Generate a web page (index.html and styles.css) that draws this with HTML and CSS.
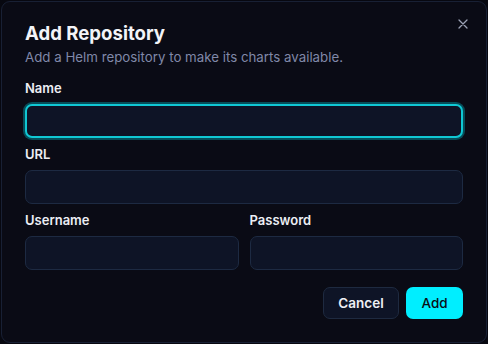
FILE: index.html
```html
<!DOCTYPE html>
<html lang="en">
<head>
<meta charset="utf-8">
<title>Add Repository</title>
<link rel="stylesheet" href="styles.css">
</head>
<body>
<div class="dialog">
  <button class="close" aria-label="Close">
    <svg width="10" height="10" viewBox="0 0 10 10"><path d="M1 1L9 9M9 1L1 9" stroke="currentColor" stroke-width="1.3" stroke-linecap="round"/></svg>
  </button>
  <div class="header">
    <h2 class="title">Add Repository</h2>
    <p class="subtitle">Add a Helm repository to make its charts available.</p>
  </div>
  <div class="form">
    <div class="field">
      <label class="label">Name</label>
      <div class="input focused"></div>
    </div>
    <div class="field">
      <label class="label">URL</label>
      <div class="input"></div>
    </div>
    <div class="row">
      <div class="field">
        <label class="label">Username</label>
        <div class="input"></div>
      </div>
      <div class="field">
        <label class="label">Password</label>
        <div class="input"></div>
      </div>
    </div>
  </div>
  <div class="actions">
    <button class="btn btn-secondary">Cancel</button>
    <button class="btn btn-primary">Add</button>
  </div>
</div>
</body>
</html>
```
FILE: styles.css
```css
* { box-sizing: border-box; }
html, body { margin: 0; padding: 0; }
body {
  width: 488px;
  height: 344px;
  background: #070810;
  font-family: Inter, "Noto Sans", sans-serif;
  overflow: hidden;
}
.dialog {
  position: relative;
  margin: 1px 0 0 1px;
  width: 486px;
  height: 342px;
  background: #0a0b15;
  border: 1px solid #182034;
  border-radius: 9px;
  padding: 17px 23px 0 23px;
}
.close {
  position: absolute;
  top: 16px;
  right: 17px;
  width: 12px;
  height: 12px;
  padding: 0;
  border: 0;
  background: none;
  color: #9ba1b5;
  display: flex;
  align-items: center;
  justify-content: center;
}
.header { margin-bottom: 11px; }
.title {
  margin: 0;
  font-size: 18.6px;
  line-height: 28px;
  font-weight: 700;
  color: #f3f4f8;
}
.subtitle {
  margin: 0;
  font-size: 13.3px;
  line-height: 20px;
  color: #8088a8;
}
.form {
  display: flex;
  flex-direction: column;
  gap: 6px;
}
.field {
  display: flex;
  flex-direction: column;
  gap: 6px;
  min-width: 0;
}
.row {
  display: grid;
  grid-template-columns: 1fr 1fr;
  gap: 11px;
}
.label {
  font-size: 13px;
  line-height: 20px;
  font-weight: 600;
  color: #eceef4;
}
.input {
  height: 34px;
  background: #0e1426;
  border: 1px solid #1d2a42;
  border-radius: 7px;
}
.input.focused {
  border: 2px solid #10c8d4;
  box-shadow: 0 0 0 2px rgba(0, 200, 215, 0.35);
}
.actions {
  display: flex;
  justify-content: flex-end;
  gap: 7px;
  margin-top: 17px;
}
.btn {
  height: 32px;
  border-radius: 7px;
  font-family: Inter, "Noto Sans", sans-serif;
  font-size: 13.5px;
  font-weight: 600;
  padding: 0;
}
.btn-secondary {
  width: 76px;
  background: #0e1426;
  border: 1px solid #1e2a40;
  color: #eef0f5;
}
.btn-primary {
  width: 57px;
  background: #00eeff;
  border: 0;
  color: #0a0c16;
  font-weight: 500;
}
```
